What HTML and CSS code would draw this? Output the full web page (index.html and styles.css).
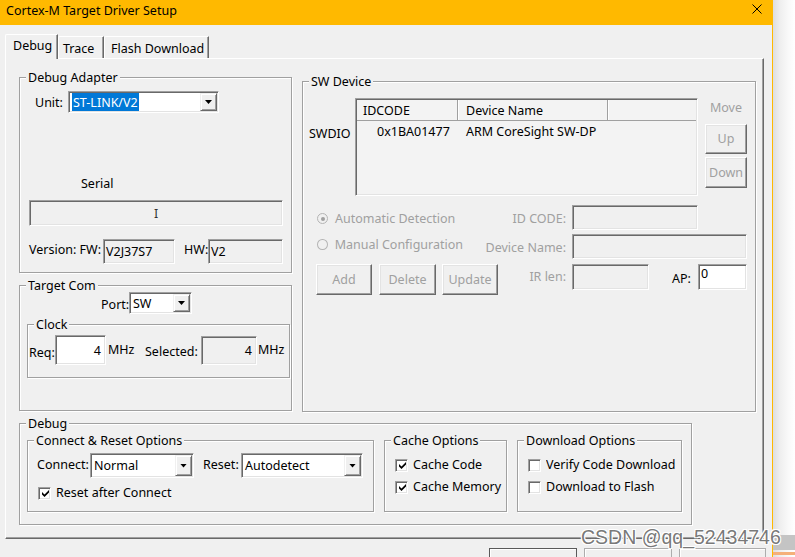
FILE: index.html
```html
<!DOCTYPE html>
<html>
<head>
<meta charset="utf-8">
<title>Cortex-M Target Driver Setup</title>
<link rel="stylesheet" href="styles.css">
</head>
<body>
<div class="window">
  <div class="titlebar">
    <span class="title">Cortex-M Target Driver Setup</span>
    <svg class="close" width="10" height="10" viewBox="0 0 10 10"><path d="M0.5 0.5 L9.5 9.5 M9.5 0.5 L0.5 9.5" stroke="#000" stroke-width="1" fill="none"/></svg>
  </div>
  <div class="client">
    <div class="tabs">
      <div class="tab tab-debug active">Debug</div>
      <div class="tab tab-trace">Trace</div>
      <div class="tab tab-flash">Flash Download</div>
    </div>
    <div class="panel">
      <div class="upper">
        <div class="leftcol">
          <div class="group g-adapter">
            <div class="legend">Debug Adapter</div>
            <div class="row unit-row">
              <span class="unit-lbl">Unit:</span>
              <div class="combo combo-unit"><span class="ctext"><span class="sel">ST-LINK/V2</span></span><span class="dd"></span></div>
            </div>
            <div class="serial-lbl">Serial</div>
            <div class="field serial-field">I</div>
            <div class="row ver-row">
              <span class="ver-lbl">Version: FW:</span>
              <div class="field fw">V2J37S7</div>
              <span class="hw-lbl">HW:</span>
              <div class="field hw">V2</div>
            </div>
          </div>
          <div class="group g-target">
            <div class="legend">Target Com</div>
            <div class="row port-row">
              <span class="port-lbl">Port:</span>
              <div class="combo combo-port"><span class="ctext">SW</span><span class="dd"></span></div>
            </div>
            <div class="group g-clock">
              <div class="legend">Clock</div>
              <div class="row clock-row">
                <span class="req-lbl">Req:</span>
                <div class="field white req-field">4</div>
                <span class="mhz mhz1">MHz</span>
                <span class="selected-lbl">Selected:</span>
                <div class="field sel-field">4</div>
                <span class="mhz mhz2">MHz</span>
              </div>
            </div>
          </div>
        </div>
        <div class="group g-sw">
          <div class="legend">SW Device</div>
          <div class="sw-top">
            <div class="swdio">SWDIO</div>
            <div class="list">
              <div class="lhead">
                <div class="hc c1">IDCODE</div>
                <div class="hc c2">Device Name</div>
                <div class="hc c3"></div>
              </div>
              <div class="lrow">
                <div class="c1 rc">0x1BA01477</div>
                <div class="c2 rc">ARM CoreSight SW-DP</div>
              </div>
            </div>
            <div class="movecol">
              <div class="move-lbl dis">Move</div>
              <div class="btn dis btn-up">Up</div>
              <div class="btn dis btn-down">Down</div>
            </div>
          </div>
          <div class="frow r1">
            <div class="fleft"><span class="radio on"></span><span class="dis">Automatic Detection</span></div>
            <div class="flbl dis">ID CODE:</div>
            <div class="field f-id"></div>
          </div>
          <div class="frow r2">
            <div class="fleft"><span class="radio"></span><span class="dis">Manual Configuration</span></div>
            <div class="flbl dis">Device Name:</div>
            <div class="field f-name"></div>
          </div>
          <div class="frow r3">
            <div class="fleft">
              <div class="btn dis b-add">Add</div>
              <div class="btn dis b-del">Delete</div>
              <div class="btn dis b-upd">Update</div>
            </div>
            <div class="flbl dis">IR len:</div>
            <div class="field f-ir"></div>
            <div class="ap-lbl">AP:</div>
            <div class="field white f-ap">0</div>
          </div>
        </div>
      </div>
      <div class="group g-debug">
        <div class="legend">Debug</div>
        <div class="subrow">
          <div class="group g-cr">
            <div class="legend">Connect &amp; Reset Options</div>
            <div class="row cr-row">
              <span class="connect-lbl">Connect:</span>
              <div class="combo combo-connect"><span class="ctext">Normal</span><span class="dd"></span></div>
              <span class="reset-lbl">Reset:</span>
              <div class="combo combo-reset"><span class="ctext">Autodetect</span><span class="dd"></span></div>
            </div>
            <div class="chkrow cr-chk">
              <span class="chk"><svg width="7" height="7" viewBox="0 0 7 7"><path d="M0 2 L2.5 4.5 L7 0 L7 2.5 L2.5 7 L0 4.5 Z" fill="#000"/></svg></span>
              <span>Reset after Connect</span>
            </div>
          </div>
          <div class="group g-cache">
            <div class="legend">Cache Options</div>
            <div class="chkrow c-first">
              <span class="chk"><svg width="7" height="7" viewBox="0 0 7 7"><path d="M0 2 L2.5 4.5 L7 0 L7 2.5 L2.5 7 L0 4.5 Z" fill="#000"/></svg></span>
              <span>Cache Code</span>
            </div>
            <div class="chkrow c-second">
              <span class="chk"><svg width="7" height="7" viewBox="0 0 7 7"><path d="M0 2 L2.5 4.5 L7 0 L7 2.5 L2.5 7 L0 4.5 Z" fill="#000"/></svg></span>
              <span>Cache Memory</span>
            </div>
          </div>
          <div class="group g-dl">
            <div class="legend">Download Options</div>
            <div class="chkrow c-first">
              <span class="chk"></span>
              <span class="clip">Verify Code Download</span>
            </div>
            <div class="chkrow c-second">
              <span class="chk"></span>
              <span>Download to Flash</span>
            </div>
          </div>
        </div>
      </div>
    </div>
    <div class="btnbar">
      <div class="pbtn pbtn-default"></div>
      <div class="pbtn"></div>
      <div class="pbtn pbtn-last"></div>
    </div>
  </div>
</div>
<div class="shadow">
  <div class="band"></div>
  <div class="oline"></div>
</div>
<div class="watermark">CSDN @qq_52434746</div>
</body>
</html>
```

FILE: styles.css
```css
* { box-sizing: border-box; }
html, body { margin: 0; padding: 0; }
body {
  width: 795px;
  height: 557px;
  overflow: hidden;
  background: #fff;
  font-family: "Noto Sans", "Liberation Sans", sans-serif;
  font-size: 12.5px;
  line-height: 16px;
  color: #000;
  display: flex;
  position: relative;
}
.window {
  width: 773px;
  height: 557px;
  flex: none;
  border-right: 1px solid #ffb900;
  display: flex;
  flex-direction: column;
  background: #f0f0f0;
}
.titlebar {
  height: 25px;
  flex: none;
  background: #ffb900;
  display: flex;
  justify-content: space-between;
  align-items: flex-start;
}
.title { padding: 4px 0 0 6px; line-height: 14px; }
.close { margin: 4px 10px 0 0; }
.client { flex: 1; padding: 9px 0 0 5px; }

/* tabs */
.tabs { display: flex; align-items: flex-end; height: 24px; position: relative; z-index: 1; }
.tab {
  height: 22px;
  border-top: 1px solid #fff;
  border-left: 1px solid #fff;
  border-right: 1px solid #696969;
  box-shadow: inset -1px 0 0 #a0a0a0;
  border-top-left-radius: 2px;
  padding-top: 4px;
  white-space: nowrap;
  background: #f0f0f0;
}
.tab.active { height: 25px; margin-bottom: -1px; padding-top: 3px; }
.tab-debug { width: 53px; padding-left: 7px; }
.tab-trace { width: 46px; padding-left: 4px; }
.tab-flash { width: 105px; padding-left: 6px; }

.panel {
  width: 759px;
  height: 481px;
  border: 1px solid;
  border-color: #fff #696969 #696969 #fff;
  box-shadow: inset -1px -1px 0 #a0a0a0;
  padding: 18px 0 0 13px;
}
.upper { display: flex; align-items: flex-start; height: 335px; }
.leftcol { width: 273px; display: flex; flex-direction: column; gap: 12px; }

/* groups */
.group {
  border: 1px solid #a0a0a0;
  box-shadow: inset 1px 1px 0 #fff, 1px 1px 0 #fff;
}
.legend {
  width: fit-content;
  height: 14px;
  line-height: 14px;
  margin: -7px 0 -1px 6px;
  padding: 0 2px;
  background: #f0f0f0;
  white-space: nowrap;
}
.g-adapter { height: 196px; }
.g-target { height: 126px; }
.g-sw { width: 454px; height: 331px; margin: 4px 0 0 10px; }
.g-debug { width: 673px; height: 102px; margin-top: 11px; }

.row { display: flex; align-items: center; white-space: nowrap; }

/* 3D controls */
.field, .combo, .list {
  border: 1px solid;
  border-color: #a0a0a0 #fff #fff #a0a0a0;
  box-shadow: inset 1px 1px 0 #696969, inset -1px -1px 0 #e3e3e3;
}
.field { background: #f0f0f0; padding: 2px 2px 1px; display: flex; align-items: center; white-space: nowrap; }
.field.white { background: #fff; }
.combo { display: flex; background: #fff; padding: 1px; }
.ctext { flex: 1; padding: 1px 0 0 2px; display: flex; align-items: center; white-space: nowrap; overflow: hidden; }
.sel { background: #0078d7; color: #fff; line-height: 18px; padding: 1px 1px 0; margin-top: -1px; }
.dd {
  width: 17px;
  flex: none;
  background: #f0f0f0;
  border: 1px solid;
  border-color: #f0f0f0 #696969 #696969 #f0f0f0;
  box-shadow: inset 1px 1px 0 #fff, inset -1px -1px 0 #a0a0a0;
  display: flex;
  align-items: center;
  justify-content: center;
}
.dd::after {
  content: "";
  width: 7px;
  height: 4px;
  background: #000;
  clip-path: polygon(0 0, 100% 0, 50% 100%);
}
.btn {
  border: 1px solid;
  border-color: #fff #696969 #696969 #fff;
  box-shadow: inset -1px -1px 0 #a0a0a0, inset 1px 1px 0 #e3e3e3;
  background: #f0f0f0;
  display: flex;
  align-items: center;
  justify-content: center;
  white-space: nowrap;
}
.dis { color: #a0a0a0; }

/* debug adapter */
.unit-row { margin-top: 7px; height: 22px; padding-left: 15px; }
.unit-lbl { width: 33px; padding-top: 2px; }
.combo-unit { width: 151px; height: 22px; }
.serial-lbl { margin: 63px 0 0 61px; }
.serial-field { margin: 8px 0 0 9px; width: 254px; height: 26px; justify-content: center; color: #333; }
.ver-row { margin-top: 13px; height: 25px; padding-left: 9px; }
.ver-lbl { width: 74px; padding-bottom: 4px; }
.fw { width: 72px; height: 25px; }
.hw-lbl { width: 24px; margin-left: 9px; padding-bottom: 4px; }
.hw { width: 75px; height: 25px; }

/* target com */
.port-row { margin-top: -1px; height: 22px; padding-left: 81px; }
.port-lbl { width: 28px; padding-top: 3px; }
.combo-port { width: 63px; height: 22px; }
.g-clock { width: 263px; height: 54px; margin: 10px 0 0 7px; }
.clock-row { margin-top: 4px; padding-left: 1px; height: 30px; }
.req-lbl { width: 26px; padding-top: 6px; }
.req-field { width: 51px; height: 30px; justify-content: flex-end; padding-right: 4px; }
.mhz { padding-bottom: 1px; }
.mhz1 { margin-left: 2px; width: 37px; }
.selected-lbl { width: 56px; padding-top: 4px; }
.sel-field { width: 56px; height: 29px; justify-content: flex-end; padding-right: 4px; }
.mhz2 { margin-left: 1px; }

/* sw device */
.sw-top { display: flex; align-items: flex-start; margin-top: 10px; }
.swdio { width: 46px; margin: 28px 0 0 6px; }
.list { width: 343px; height: 98px; background: #f3f3f3; padding: 1px; }
.lhead { display: flex; height: 21px; border-bottom: 1px solid #a0a0a0; }
.hc { display: flex; align-items: center; padding-top: 2px; border-right: 1px solid #a0a0a0; box-shadow: 1px 0 0 #fff; white-space: nowrap; }
.lhead .c3 { border-right: none; box-shadow: none; flex: 1; }
.c1 { width: 101px; padding-left: 6px; }
.c2 { width: 150px; padding-left: 8px; }
.lrow { display: flex; margin-top: 3px; white-space: nowrap; }
.lrow .c1 { padding-left: 20px; }
.lrow .c2 { padding-left: 8px; }
.movecol { width: 42px; margin-left: 7px; display: flex; flex-direction: column; }
.move-lbl { text-align: center; margin-top: 2px; }
.btn-up { margin-top: 8px; height: 30px; }
.btn-down { margin-top: 3px; height: 31px; }

.frow { display: flex; align-items: center; white-space: nowrap; }
.fleft { display: flex; align-items: center; padding: 2px 0 0 13px; width: 160px; }
.flbl { width: 103px; text-align: right; padding-top: 2px; }
.frow .field { margin-left: 6px; }
.r1 { margin-top: 9px; height: 25px; }
.r2 { margin-top: 4px; height: 25px; }
.r2 .fleft { padding: 0 0 4px 13px; }
.r2 .flbl { padding-top: 3px; }
.f-id { width: 126px; height: 25px; }
.f-name { width: 175px; height: 25px; }
.radio {
  width: 11px;
  height: 11px;
  border-radius: 50%;
  border: 1px solid #b4b4b4;
  background: #f0f0f0;
  margin: 0 7px 0 1px;
  display: flex;
  align-items: center;
  justify-content: center;
}
.radio.on::after { content: ""; width: 4px; height: 4px; border-radius: 50%; background: #a0a0a0; }
.r3 { margin-top: 5px; height: 31px; align-items: flex-start; }
.r3 .fleft { width: 195px; padding: 0 0 0 13px; }
.r3 .flbl { width: 68px; margin-top: 5px; padding-top: 0; }
.b-add { width: 56px; height: 31px; }
.b-del { width: 57px; height: 31px; margin-left: 7px; }
.b-upd { width: 56px; height: 31px; margin-left: 6px; }
.f-ir { width: 77px; height: 26px; }
.ap-lbl { width: 26px; margin: 7px 0 0 23px; }
.frow .f-ap { width: 49px; height: 26px; margin-left: 0; align-items: flex-start; padding: 1px 2px; }

/* debug bottom */
.subrow { display: flex; gap: 10px; margin: 10px 0 0 7px; }
.g-cr { width: 347px; height: 72px; }
.g-cache { width: 123px; height: 72px; }
.g-dl { width: 165px; height: 72px; }
.cr-row { margin-top: 6px; height: 25px; padding-left: 9px; }
.connect-lbl { width: 53px; padding-bottom: 2px; }
.combo-connect { width: 104px; height: 25px; }
.reset-lbl { width: 38px; margin-left: 9px; padding-bottom: 2px; }
.combo-reset { width: 122px; height: 25px; }
.chkrow { display: flex; align-items: center; height: 16px; padding-left: 10px; white-space: nowrap; }
.cr-chk { margin-top: 7px; }
.c-first { margin-top: 10px; }
.c-second { margin-top: 6px; }
.chk {
  width: 13px;
  height: 13px;
  flex: none;
  margin-right: 5px;
  background: #fff;
  border: 1px solid;
  border-color: #a0a0a0 #fff #fff #a0a0a0;
  box-shadow: inset 1px 1px 0 #696969, inset -1px -1px 0 #e3e3e3;
  display: flex;
  align-items: center;
  justify-content: center;
}
.chk svg { margin: 1px 0 0 1px; }
.clip { width: 129px; overflow: hidden; }

/* bottom buttons */
.btnbar { display: flex; gap: 7px; margin-top: 9px; padding-left: 484px; }
.pbtn {
  width: 88px;
  height: 24px;
  border: 1px solid #adadad;
  box-shadow: inset 1px 1px 0 #fff;
  background: #f0f0f0;
}
.pbtn-default { border-color: #5a5a5a; }
.pbtn-last { width: 87px; }

/* outside window */
.shadow {
  flex: 1;
  display: flex;
  flex-direction: column;
  background: linear-gradient(to right, #dedede, #eeeeee 30%, #f9f9f9 70%, #fff);
}
.band { margin-top: 535px; height: 15px; background: #c4c4c4; }
.oline { margin-top: 2px; height: 3px; background: #f5b07a; }

.watermark {
  position: absolute;
  left: 581px;
  top: 526px;
  font-family: "Liberation Sans", Arial, sans-serif;
  font-size: 19.5px;
  line-height: 22px;
  color: rgba(85, 85, 85, 0.8);
  text-shadow: 1px 1px 0 #fff, -1px -1px 0 #fff, 1px -1px 0 #fff, -1px 1px 0 #fff;
  white-space: nowrap;
}
```
